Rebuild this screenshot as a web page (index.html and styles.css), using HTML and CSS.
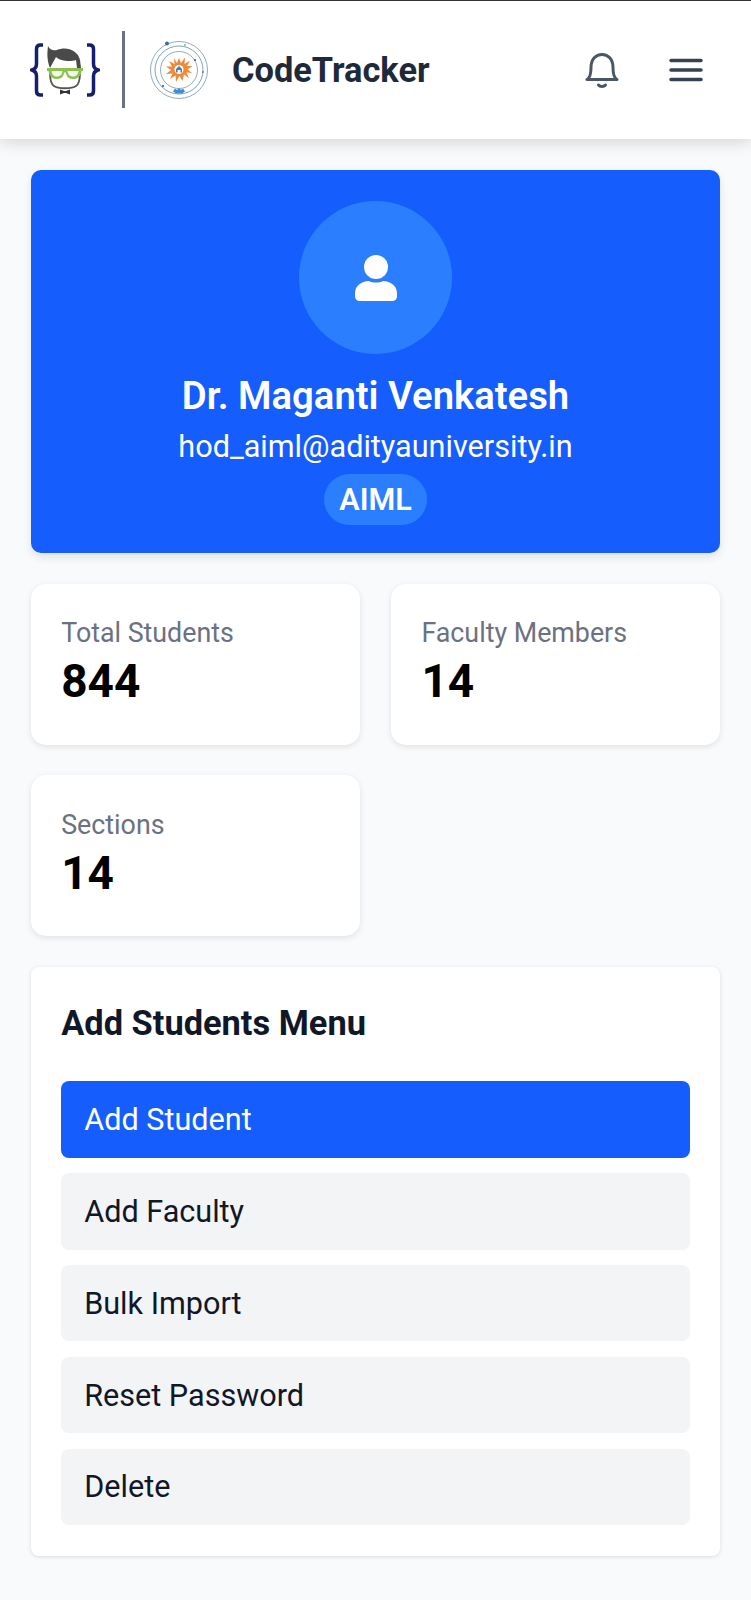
FILE: index.html
```html
<!DOCTYPE html>
<html lang="en">
<head>
<meta charset="utf-8">
<title>CodeTracker</title>
<link rel="stylesheet" href="styles.css">
</head>
<body>
<header class="topbar">
  <div class="brand">
    <svg class="logo-code" viewBox="0 0 70 54" width="70" height="54" aria-hidden="true">
      <path d="M13 2H10.500C8 2 6.500 3.500 6.500 6V21C6.500 24 5 26 2 27C5 28 6.500 30 6.500 33V48C6.500 50.500 8 52 10.500 52H13" fill="none" stroke="#14206e" stroke-width="3.500"/>
      <path d="M57 2H59.500C62 2 63.500 3.500 63.500 6V21C63.500 24 65 26 68 27C65 28 63.500 30 63.500 33V48C63.500 50.500 62 52 59.500 52H57" fill="none" stroke="#14206e" stroke-width="3.500"/>
      <path d="M20 30C20 37 21 41 24 43C28 46 42 46 46 43C49 41 50 37 50 30" fill="none" stroke="#555" stroke-width="1.800"/>
      <path d="M20 25C17 18 17 10 18 3C20 7 23 8 27 7C36 3 48 7 50 17L51 25H47L46 17C40 19 30 18 26 14C24 18 22 21 20 25Z" fill="#4a4a4a"/>
      <path d="M17 25H53V28H51.500V28.500C50.500 34 47 36.500 42 36C38 35.500 36.500 33 35.800 29.500H34.200C33.500 33 32 35.500 28 36C23 36.500 19.500 34 18.500 28.500V28H17Z" fill="#8cc152"/>
      <path d="M21.500 28C22 32 24.500 34 28 33.500C31 33 32.200 31 32.500 28ZM37.500 28C37.800 31 39 33 42 33.500C45.500 34 48 32 48.500 28Z" fill="#f3f8ea"/>
      <path d="M30 46.500L34 48H36L40 46.500V51.500L36 50H34L30 51.500Z" fill="#333"/>
    </svg>
    <span class="divider"></span>
    <svg class="logo-uni" viewBox="0 0 60 60" width="60" height="60" aria-hidden="true">
      <circle cx="30" cy="30" r="28.500" fill="none" stroke="#7895a8" stroke-width=".8"/>
      <circle cx="30" cy="30" r="24" fill="none" stroke="#5d8ba8" stroke-width=".8"/>
      <circle cx="30" cy="30" r="18.500" fill="none" stroke="#7895a8" stroke-width=".8"/>
      <circle cx="18" cy="3.500" r="2" fill="#2f6fa8"/>
      <circle cx="46" cy="20" r="1" fill="#35506b"/>
      <circle cx="14" cy="46" r="1" fill="#35506b"/>
      <circle cx="54" cy="32" r=".8" fill="#35506b"/>
      <circle cx="36" cy="5" r=".7" fill="#35506b"/>
      <path d="M30 18L32 23L36 17.500L35.500 24L41 20.500L38 26L43.500 26L38.500 29.500L43 33L37.500 32.500L40 38L35 34.500L33.500 41L30.500 36L27 42L26.500 35.500L21 39L23.500 33.500L17 34L22 30L17 26.500L23 26.500L20 21L25.500 24L25 18L28 23Z" fill="#ee8a3a"/>
      <circle cx="30" cy="29.500" r="4.500" fill="#fff"/>
      <path d="M27 32.500V29L30 26L33 29V32.500H31.500V30H28.500V32.500Z" fill="#3d7fb5"/>
      <path d="M24 51.500L26 48.500L28 50L30 48L32 50L34 48.500L36 51.500L33 53.500H27Z" fill="#3d8fd0"/>
    </svg>
    <span class="brand-name">CodeTracker</span>
  </div>
  <div class="top-actions">
    <svg class="icon-bell" viewBox="0 0 34 36" width="34" height="36" aria-hidden="true">
      <path d="M2 27.500H32C29 26 28 23 28 15.500C28 7 23 2.500 17 2.500C11 2.500 6 7 6 15.500C6 23 5 26 2 27.500Z" fill="none" stroke="#4a5565" stroke-width="3" stroke-linejoin="round"/>
      <path d="M13.500 33C15 35 19 35 20.500 33" fill="none" stroke="#4a5565" stroke-width="3" stroke-linecap="round"/>
    </svg>
    <svg class="icon-menu" viewBox="0 0 34 24" width="34" height="24" aria-hidden="true">
      <path d="M2 2.500H32M2 12H32M2 21.500H32" fill="none" stroke="#364153" stroke-width="3.500" stroke-linecap="round"/>
    </svg>
  </div>
</header>
<main class="content">
  <section class="hero">
    <div class="avatar">
      <svg viewBox="0 0 42 46" width="42" height="46" aria-hidden="true">
        <circle cx="21" cy="12" r="12" fill="#fff"/>
        <path d="M0 38C0 30 8 26 14 26C17 28 25 28 28 26C34 26 42 30 42 38V41C42 44 40 46 37 46H5C2 46 0 44 0 41Z" fill="#fff"/>
      </svg>
    </div>
    <h1 class="hero-name">Dr. Maganti Venkatesh</h1>
    <p class="hero-email">hod_aiml@adityauniversity.in</p>
    <span class="hero-badge">AIML</span>
  </section>
  <section class="stats">
    <div class="stat">
      <div class="stat-label">Total Students</div>
      <div class="stat-value">844</div>
    </div>
    <div class="stat">
      <div class="stat-label">Faculty Members</div>
      <div class="stat-value">14</div>
    </div>
    <div class="stat">
      <div class="stat-label">Sections</div>
      <div class="stat-value">14</div>
    </div>
  </section>
  <section class="menu-card">
    <h2 class="menu-title">Add Students Menu</h2>
    <nav class="menu-list">
      <a class="menu-item is-active">Add Student</a>
      <a class="menu-item">Add Faculty</a>
      <a class="menu-item">Bulk Import</a>
      <a class="menu-item">Reset Password</a>
      <a class="menu-item">Delete</a>
    </nav>
  </section>
</main>
</body>
</html>
```
FILE: styles.css
```css
* { box-sizing: border-box; }
html, body { margin: 0; padding: 0; }
body {
  background: #f9fafb;
  font-family: Roboto, "Noto Sans", sans-serif;
  color: #101828;
  min-height: 1600px;
}
.topbar {
  height: 139px;
  background: #fff;
  border-top: 1px solid #333;
  padding: 0 48px 0 30px;
  display: flex;
  align-items: center;
  justify-content: space-between;
  box-shadow: 0 4px 14px rgba(0, 0, 0, .14);
}
.brand { display: flex; align-items: center; margin-top: -1px; }
.logo-code { display: block; }
.divider {
  width: 3px;
  height: 77px;
  background: #6a7282;
  margin: 0 24px 0 22px;
}
.logo-uni { display: block; }
.brand-name {
  margin-left: 23px;
  font-size: 34.400px;
  font-weight: 700;
  color: #1e2939;
}
.top-actions { display: flex; align-items: center; gap: 50px; }
.content {
  padding: 31px 30.600px 0;
  display: flex;
  flex-direction: column;
  gap: 30.600px;
}
.hero {
  height: 383px;
  background: #155dfc;
  border-radius: 10px;
  padding-top: 31px;
  color: #fff;
  display: flex;
  flex-direction: column;
  align-items: center;
  box-shadow: 0 4px 10px rgba(0, 0, 0, .1);
}
.avatar {
  width: 153px;
  height: 153px;
  border-radius: 50%;
  background: #2b7fff;
  display: flex;
  align-items: center;
  justify-content: center;
}
.hero-name {
  margin: 20px 0 0;
  font-size: 38.250px;
  line-height: 44px;
  font-weight: 600;
}
.hero-email {
  margin: 10px 0 0;
  font-size: 30.600px;
  line-height: 38px;
  font-weight: 400;
}
.hero-badge {
  margin-top: 8px;
  height: 51px;
  padding: 0 15px;
  border-radius: 26px;
  background: #2b7fff;
  font-size: 30.600px;
  font-weight: 600;
  line-height: 51px;
}
.stats {
  display: grid;
  grid-template-columns: 1fr 1fr;
  gap: 30.600px;
}
.stat {
  height: 161px;
  background: #fff;
  border-radius: 15px;
  padding: 29.600px 30.600px;
  box-shadow: 0 2px 6px rgba(0, 0, 0, .1);
}
.stat-label {
  font-size: 26.800px;
  line-height: 40px;
  color: #6a7282;
}
.stat-value {
  font-size: 46px;
  line-height: 56px;
  font-weight: 700;
  color: #000;
}
.menu-card {
  height: 589px;
  background: #fff;
  border-radius: 8px;
  padding: 30.600px;
  box-shadow: 0 1px 4px rgba(0, 0, 0, .12);
}
.menu-title {
  margin: 0 0 31px;
  font-size: 34.400px;
  line-height: 53px;
  font-weight: 700;
  color: #101828;
}
.menu-list { display: flex; flex-direction: column; gap: 15.300px; }
.menu-item {
  height: 76.500px;
  border-radius: 8px;
  background: #f3f4f6;
  padding: 0 23px;
  display: flex;
  align-items: center;
  font-size: 30.600px;
  color: #101828;
}
.is-active { background: #155dfc; color: #fff; }
```
